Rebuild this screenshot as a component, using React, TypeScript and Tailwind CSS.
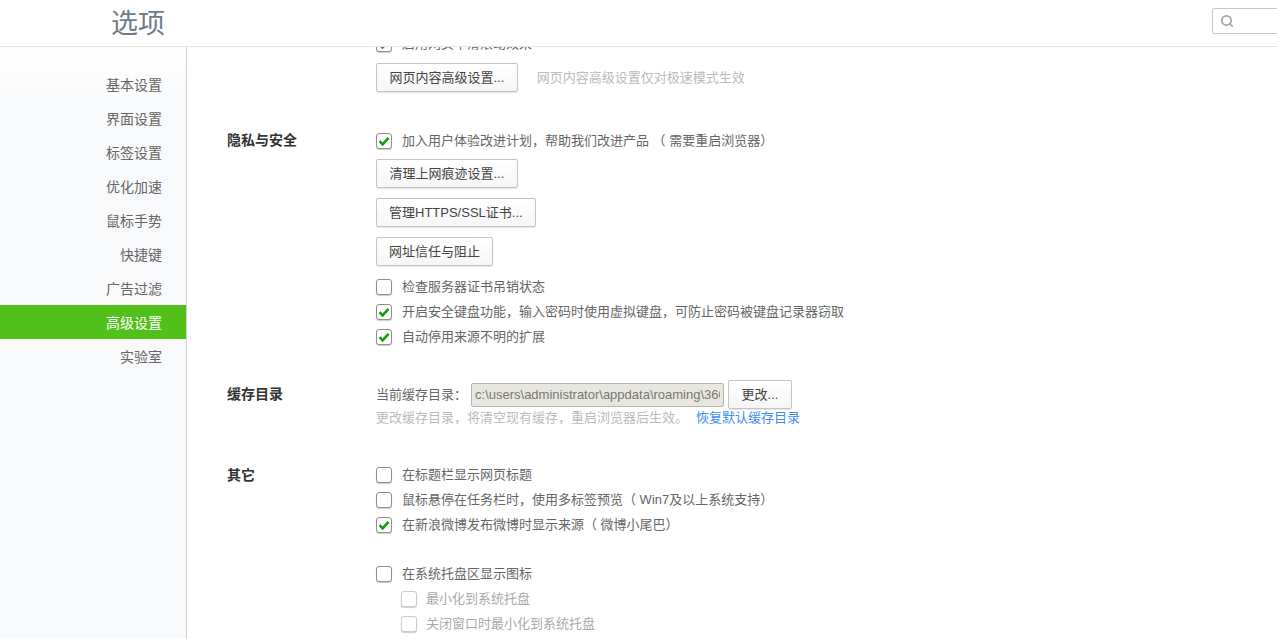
import React from 'react';
import { Search } from 'lucide-react';

const navItems = ['基本设置', '界面设置', '标签设置', '优化加速', '鼠标手势', '快捷键', '广告过滤', '高级设置', '实验室'];

const Check: React.FC<{ checked?: boolean; disabled?: boolean; label: string; className?: string }> = ({ checked, disabled, label, className }) => (
  <label className={`flex items-center h-[25px] ${className || ''}`}>
    <span
      className={`flex items-center justify-center w-4 h-4 rounded-[3px] bg-white border shadow-[0_1px_1px_rgba(0,0,0,0.2)] ${disabled ? 'border-[#ccc]' : 'border-[#8f8f8f]'}`}
    >
      {checked && (
        <svg width="12" height="12" viewBox="0 0 12 12">
          <path d="M1.5 6.2 L4.6 9.3 L10.5 2.8" fill="none" stroke="#169a12" strokeWidth="2.6" />
        </svg>
      )}
    </span>
    <span className={disabled ? 'ml-[9px] text-[#aaa]' : 'ml-[10px]'}>{label}</span>
  </label>
);

const Btn: React.FC<{ children: React.ReactNode; className?: string }> = ({ children, className }) => (
  <button className={`block h-[29px] rounded-[2px] border border-[#c4c4c4] bg-gradient-to-b from-white to-[#f6f6f6] text-[#444] shadow-[0_1px_1px_rgba(0,0,0,0.1)] whitespace-nowrap ${className || 'px-[12.5px]'}`}>
    {children}
  </button>
);

const Section: React.FC<{ title?: string; className?: string; titleClass?: string; children: React.ReactNode }> = ({ title, className, titleClass, children }) => (
  <section className={`flex ${className || ''}`}>
    <h3 className={`w-[189px] shrink-0 pl-10 text-[14px] font-bold text-[#333] ${titleClass || 'h-[25px] leading-[25px]'}`}>{title}</h3>
    <div className="flex-1 min-w-0">{children}</div>
  </section>
);

export default function App() {
  return (
    <div className="h-screen overflow-hidden bg-white text-[13px] text-[#666] font-['Liberation_Sans','Noto_Sans_CJK_SC',sans-serif] flex flex-col">
      {/* Header */}
      <header className="relative z-10 h-[47px] shrink-0 bg-white border-b border-[#e6e6e6] flex items-start overflow-hidden">
        <h1 className="ml-[111px] mt-[5px] text-[27px] leading-[38px] font-normal text-[#6f7b88]">选项</h1>
        <div className="ml-auto -mr-[20px] mt-2 w-[85px] h-[26px] border border-[#c8c8c8] rounded-[2px] flex items-center pl-[7px]">
          <Search size={14} strokeWidth={3} className="text-[#a8a8a8]" />
        </div>
      </header>

      <div className="flex flex-1 min-h-0">
        {/* Sidebar */}
        <nav className="w-[187px] shrink-0 border-r border-[#cfd2d6] bg-gradient-to-b from-white to-[#f8f9fb] to-[60px] pt-[20px] text-[14px]">
          {navItems.map((item) => (
            <div
              key={item}
              className={`h-[34px] leading-[36px] text-right pr-6 ${item === '高级设置' ? 'bg-[#52c01a] text-white' : 'text-[#666]'}`}
            >
              {item}
            </div>
          ))}
        </nav>

        {/* Options, scrolled partway down */}
        <main className="flex-1 min-w-0 overflow-hidden">
          <div className="-mt-[16px]">
            <Section>
              <Check checked label="启用网页平滑滚动效果" />
              <div className="flex items-center mt-[7px]">
                <Btn>网页内容高级设置...</Btn>
                <span className="ml-[19px] text-[#bbb]">网页内容高级设置仅对极速模式生效</span>
              </div>
            </Section>

            <Section title="隐私与安全" className="mt-9">
              <Check checked label="加入用户体验改进计划，帮助我们改进产品 （ 需要重启浏览器）" />
              <Btn className="mt-[6px] px-[12.5px]">清理上网痕迹设置...</Btn>
              <Btn className="mt-[10px] px-[12px]">管理HTTPS/SSL证书...</Btn>
              <Btn className="mt-[10px] px-[12px]">网址信任与阻止</Btn>
              <Check className="mt-2" label="检查服务器证书吊销状态" />
              <Check checked label="开启安全键盘功能，输入密码时使用虚拟键盘，可防止密码被键盘记录器窃取" />
              <Check checked label="自动停用来源不明的扩展" />
            </Section>

            <Section title="缓存目录" className="mt-[31px]" titleClass="h-[29px] leading-[29px]">
              <div className="flex items-center h-[29px]">
                <span>当前缓存目录：</span>
                <input
                  readOnly
                  disabled
                  value="c:\users\administrator\appdata\roaming\360se6\user data"
                  className="ml-[4px] w-[253px] h-[24px] px-[3px] rounded-[2px] border border-[#b5b5ad] bg-[#e8e7df] text-[#777]"
                />
                <Btn className="ml-1 w-[64px]">更改...</Btn>
              </div>
              <div className="-mt-px h-5 leading-5 text-[#bbb]">
                更改缓存目录，将清空现有缓存，重启浏览器后生效。
                <a className="ml-[8px] text-[#3d8ff0]">恢复默认缓存目录</a>
              </div>
            </Section>

            <Section title="其它" className="mt-[34px]" titleClass="h-[25px] leading-[27px]">
              <Check label="在标题栏显示网页标题" />
              <Check label="鼠标悬停在任务栏时，使用多标签预览（ Win7及以上系统支持）" />
              <Check checked label="在新浪微博发布微博时显示来源（ 微博小尾巴）" />
              <Check className="mt-6" label="在系统托盘区显示图标" />
              <Check disabled className="ml-[25px]" label="最小化到系统托盘" />
              <Check disabled className="ml-[25px]" label="关闭窗口时最小化到系统托盘" />
            </Section>
          </div>
        </main>
      </div>
    </div>
  );
}
